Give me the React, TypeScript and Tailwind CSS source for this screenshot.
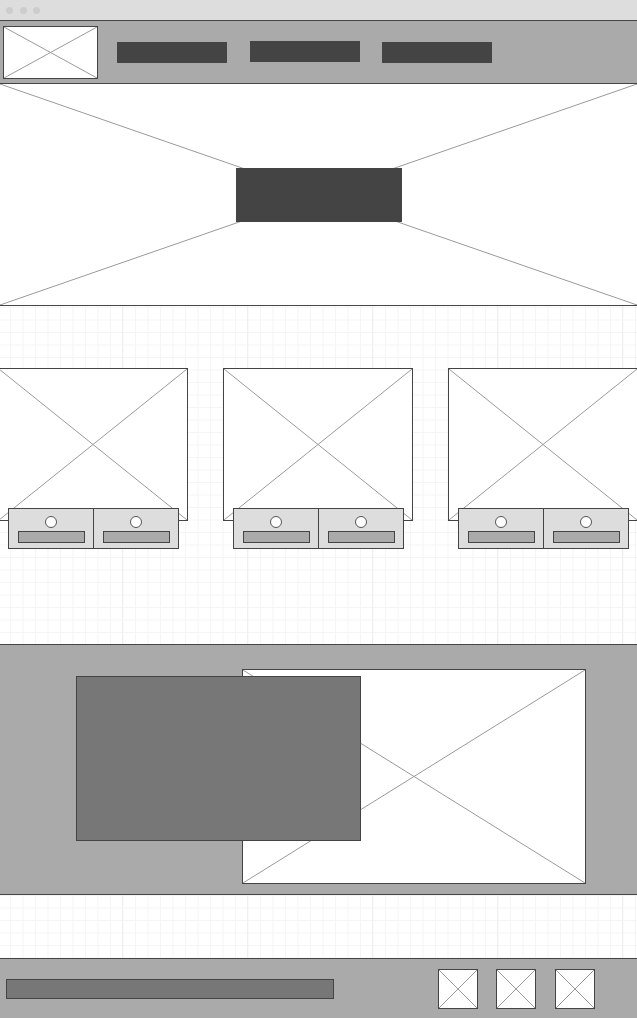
import React from "react";

function XLines({ color = "#9a9a9a" }: { color?: string }) {
  return (
    <svg
      className="absolute inset-0 w-full h-full pointer-events-none"
      viewBox="0 0 100 100"
      preserveAspectRatio="none"
    >
      <line x1="0" y1="0" x2="100" y2="100" stroke={color} strokeWidth="1" vectorEffect="non-scaling-stroke" />
      <line x1="100" y1="0" x2="0" y2="100" stroke={color} strokeWidth="1" vectorEffect="non-scaling-stroke" />
    </svg>
  );
}

function XBox({ className }: { className: string }) {
  return (
    <div className={"relative bg-white border border-[#444444] shrink-0 " + className}>
      <XLines />
    </div>
  );
}

function Card() {
  return (
    <div className="w-[190px] shrink-0 flex flex-col">
      <XBox className="w-[190px] h-[153px]" />
      <div className="relative mt-[-13px] ml-[10px] w-[171px] h-[41px] border border-[#444444] bg-[#dddddd] flex">
        {[0, 1].map((i) => (
          <div
            key={i}
            className={
              "flex flex-col items-center pt-[7px] " +
              (i === 0 ? "w-[85px] border-r border-[#444444]" : "w-[84px]")
            }
          >
            <div className="w-[12px] h-[12px] rounded-full border border-[#555555] bg-white" />
            <div className="mt-[3px] w-[67px] h-[12px] bg-[#aaaaaa] border border-[#444444]" />
          </div>
        ))}
      </div>
    </div>
  );
}

const grid =
  "bg-[linear-gradient(to_right,#efefef_1px,transparent_1px),linear-gradient(to_right,#f5f5f5_1px,transparent_1px),linear-gradient(to_bottom,#f5f5f5_1px,transparent_1px)] bg-[size:125px_100%,12.5px_12.5px,12.5px_12.5px]";

export default function App() {
  return (
    <div className="w-[637px] h-[1018px] overflow-hidden bg-white flex flex-col font-['Liberation_Sans',sans-serif]">
      {/* window title bar */}
      <div className="h-[20px] shrink-0 bg-[#dddddd] flex items-center pl-[6px] gap-[6.5px]">
        <div className="w-[7px] h-[7px] rounded-full bg-[#cdcdcd]" />
        <div className="w-[7px] h-[7px] rounded-full bg-[#cdcdcd]" />
        <div className="w-[7px] h-[7px] rounded-full bg-[#cdcdcd]" />
      </div>

      {/* header */}
      <div className="h-[64px] shrink-0 border-y border-[#444444] bg-[#aaaaaa] flex items-center pl-[3px]">
        <XBox className="w-[95px] h-[53px]" />
        <div className="ml-[19px] flex items-center gap-[22.5px]">
          <div className="w-[110px] h-[21px] bg-[#444444]" />
          <div className="w-[110px] h-[21px] mb-[1px] bg-[#444444]" />
          <div className="w-[110px] h-[21px] bg-[#444444]" />
        </div>
      </div>

      {/* hero */}
      <div className="relative h-[222px] shrink-0 border-b border-[#444444] bg-white flex items-center justify-center">
        <XLines />
        <div className="relative w-[166px] h-[54px] bg-[#444444]" />
      </div>

      {/* cards */}
      <div className={"h-[338px] shrink-0 bg-white " + grid + " bg-[position:122px_0,10px_1px,10px_1px]"}>
        <div className="flex gap-[35px] ml-[-2px] pt-[62px]">
          <Card />
          <Card />
          <Card />
        </div>
      </div>

      {/* feature */}
      <div className="relative h-[251px] shrink-0 border-y border-[#444444] bg-[#aaaaaa]">
        <XBox className="ml-[242px] mt-[24px] w-[344px] h-[215px]" />
        <div className="absolute left-[76px] top-[31px] w-[285px] h-[165px] bg-[#777777] border border-[#444444]" />
      </div>

      {/* spacer grid */}
      <div className={"h-[63px] shrink-0 bg-white " + grid + " bg-[position:122px_0,10px_0px,10px_0px]"} />

      {/* footer */}
      <div className="h-[60px] shrink-0 border-t border-[#444444] bg-[#aaaaaa] flex items-center">
        <div className="ml-[6px] w-[328px] h-[20px] bg-[#777777] border border-[#444444]" />
        <div className="ml-[104px] flex items-center gap-[18px]">
          <XBox className="w-[40px] h-[40px]" />
          <XBox className="w-[40px] h-[40px]" />
          <XBox className="w-[40px] h-[40px] ml-[1px]" />
        </div>
      </div>
    </div>
  );
}
